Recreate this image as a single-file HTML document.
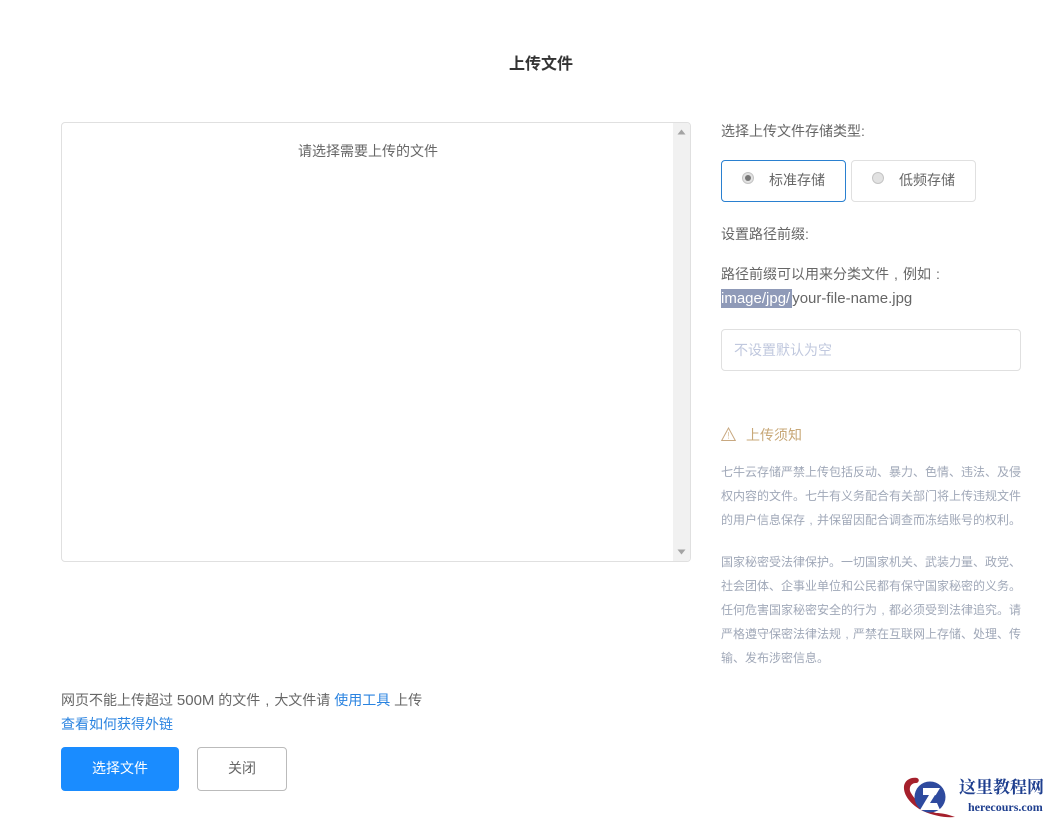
<!DOCTYPE html>
<html lang="zh">
<head>
<meta charset="utf-8">
<title>上传文件</title>
<style>
html,body{margin:0;padding:0;background:#fff;width:1049px;height:818px;overflow:hidden}
body{position:relative;font-family:"Liberation Sans","Noto Sans CJK SC",sans-serif;font-size:14px;color:#666}
.t{position:absolute;white-space:nowrap;line-height:24px;height:24px}
.b{position:absolute;box-sizing:border-box}
a{color:#2a83e0;text-decoration:none}
.n{font-size:12px;color:#a0a8b8}
.r{position:absolute;width:12px;height:12px;border-radius:50%;box-sizing:border-box;border:1px solid #c4c4c4;background:#e2e2e2}
.c{display:inline-block;width:1em;text-align:center}
.l{font-size:15px}
</style>
</head>
<body>
<div class="t" style="left:509px;top:53px;font-size:16px;font-weight:bold;color:#333">上传文件</div>

<div class="b" style="left:61px;top:122px;width:630px;height:440px;border:1px solid #e0e0e0;border-radius:4px;overflow:hidden">
  <div class="b" style="right:0;top:0;width:17px;height:438px;background:#f1f1f1"></div>
  <svg style="position:absolute;right:4px;top:6px" width="9" height="6"><path d="M4.500 0.500L8.500 5.500H0.500Z" fill="#a3a3a3"/></svg>
  <svg style="position:absolute;right:4px;bottom:6px" width="9" height="6"><path d="M0.500 0.500H8.500L4.500 5.500Z" fill="#a3a3a3"/></svg>
</div>
<div class="t" style="left:298px;top:139px">请选择需要上传的文件</div>

<div class="t" style="left:721px;top:119px">选择上传文件存储类型:</div>
<div class="b" style="left:721px;top:160px;width:125px;height:42px;border:1px solid #2a80d0;border-radius:4px"></div>
<div class="r" style="left:742px;top:172px"></div>
<div style="position:absolute;left:745px;top:175px;width:6px;height:6px;border-radius:50%;background:#777"></div>
<div class="t" style="left:769px;top:168px">标准存储</div>
<div class="b" style="left:851px;top:160px;width:125px;height:42px;border:1px solid #e0e0e0;border-radius:4px"></div>
<div class="r" style="left:872px;top:172px"></div>
<div class="t" style="left:899px;top:168px">低频存储</div>

<div class="t" style="left:721px;top:222px">设置路径前缀:</div>
<div class="t" style="left:721px;top:262px">路径前缀可以用来分类文件<span class="c">,</span>例如<span class="c">:</span></div>
<div class="t l" style="left:721px;top:287px"><span style="background:#8f9ab8;color:#fff;display:inline-block;height:19px;line-height:19px;vertical-align:top;margin-top:2px;padding-right:2px">image/jpg/</span>your-file-name.jpg</div>

<div class="b" style="left:721px;top:329px;width:300px;height:42px;border:1px solid #e0e0e0;border-radius:4px"></div>
<div class="t" style="left:734px;top:338px;color:#c0c8de">不设置默认为空</div>

<svg style="position:absolute;left:721px;top:427px" width="15" height="14" viewBox="0 0 15 14"><path d="M7.500 1L14.300 13.500H0.700Z" fill="none" stroke="#c8a880" stroke-width="1"/><path d="M7.500 5V9.500M7.500 10.500V11.800" fill="none" stroke="#e0cdb0" stroke-width="1"/></svg>
<div class="t" style="left:746px;top:423px;color:#c8a878">上传须知</div>

<div class="t n" style="left:721px;top:460px">七牛云存储严禁上传包括反动、暴力、色情、违法、及侵</div>
<div class="t n" style="left:721px;top:484px">权内容的文件。七牛有义务配合有关部门将上传违规文件</div>
<div class="t n" style="left:721px;top:508px">的用户信息保存<span class="c">,</span>并保留因配合调查而冻结账号的权利。</div>
<div class="t n" style="left:721px;top:550px">国家秘密受法律保护。一切国家机关、武装力量、政党、</div>
<div class="t n" style="left:721px;top:574px">社会团体、企事业单位和公民都有保守国家秘密的义务。</div>
<div class="t n" style="left:721px;top:598px">任何危害国家秘密安全的行为<span class="c">,</span>都必须受到法律追究。请</div>
<div class="t n" style="left:721px;top:622px">严格遵守保密法律法规<span class="c">,</span>严禁在互联网上存储、处理、传</div>
<div class="t n" style="left:721px;top:646px">输、发布涉密信息。</div>

<div class="t" style="left:61px;top:688px">网页不能上传超过 <span class="l">500M</span> 的文件<span class="c">,</span>大文件请 <a href="#">使用工具</a> 上传</div>
<div class="t" style="left:61px;top:712px"><a href="#">查看如何获得外链</a></div>

<div class="b" style="left:61px;top:747px;width:118px;height:44px;background:#1a8cff;border-radius:4px;color:#fff;text-align:center;line-height:42px">选择文件</div>
<div class="b" style="left:197px;top:747px;width:90px;height:44px;border:1px solid #bbb;border-radius:4px;text-align:center;line-height:40px">关闭</div>

<svg style="position:absolute;left:900px;top:775px" width="56" height="43" viewBox="0 0 56 43">
  <path d="M17 3C11 2 5 5 4 11C3 20 11 30 23 36C34 41 46 43 55 42C47 39 41 38 36 38C26 35 14 25 10 16C9 11 12 8 16 8C19 8 20 4 17 3Z" fill="#a5202c"/>
  <circle cx="30" cy="22" r="15.500" fill="#2e4a9e"/>
  <path d="M23 13H40L31 28H37L40 35H20L29 20H23Z" fill="#fff"/>
  <path d="M30 28L35 20L37 21L33 28Z" fill="#2e4a9e"/>
</svg>
<div class="t" style="left:959px;top:776px;font-family:'Liberation Serif','Noto Serif CJK SC',serif;font-size:17px;font-weight:bold;color:#1f3f8f">这里教程网</div>
<div class="t" style="left:968px;top:795px;font-family:'Liberation Serif',serif;font-size:12px;font-weight:bold;color:#1f3f8f">herecours.com</div>
</body>
</html>
